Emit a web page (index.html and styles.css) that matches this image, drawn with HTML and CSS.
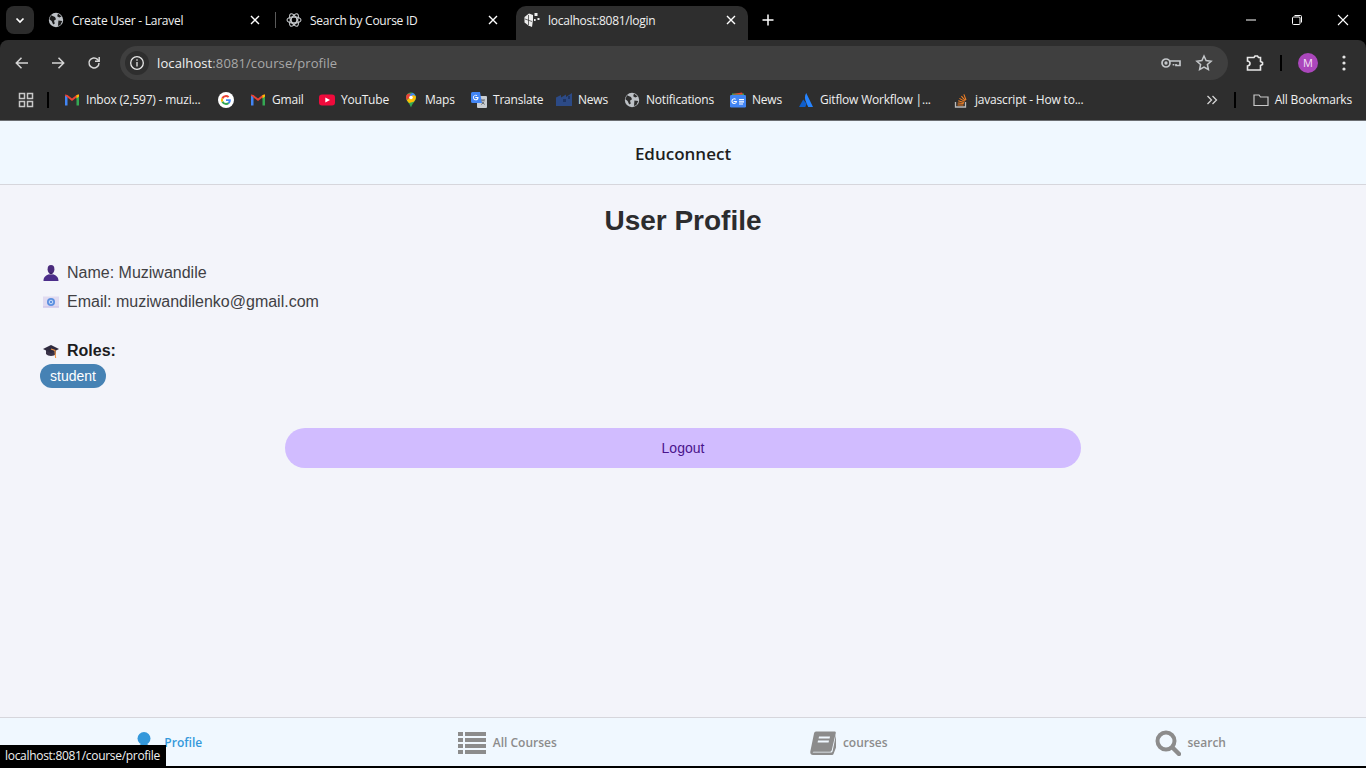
FILE: index.html
```html
<!DOCTYPE html>
<html lang="en">
<head>
    <meta charset="UTF-8">
    <meta name="viewport" content="width=device-width, initial-scale=1.0">
    <title>Educonnect</title>
    <link rel="stylesheet" href="styles.css">
</head>
<body>
    <div class="browser">
        <!-- Tab strip -->
        <div class="tabstrip">
            <div class="tab-search">
                <svg width="12" height="12" viewBox="0 0 12 12"><path d="M2.5 4.500 6 8l3.500-3.500" fill="none" stroke="#fff" stroke-width="1.700"/></svg>
            </div>
            <div class="tab">
                <svg class="tab-icon" viewBox="0 0 16 16"><circle cx="8" cy="8" r="7.200" fill="#bdc1c6"/><path d="M3 3.200 7 5l1 2.200-2 1.600.8 2.600-1.600 1L3.600 9 1.400 7.200zM10 1.600l3.600 2.800-2.400 1.200-2-1.400zM10.400 8.600l3.800.4-1.800 4-2.400 1z" fill="#1a1a1a"/></svg>
                <span class="tab-title">Create User - Laravel</span>
                <svg class="tab-close" viewBox="0 0 10 10"><path d="M1 1l8 8M9 1 1 9" stroke="#fff" stroke-width="1.400"/></svg>
            </div>
            <div class="tab-sep"></div>
            <div class="tab">
                <svg class="tab-icon" viewBox="0 0 16 16" fill="none" stroke="#c4c7ca" stroke-width="1.100"><circle cx="8" cy="8" r="3"/><ellipse cx="8" cy="8" rx="7" ry="3.200"/><ellipse cx="8" cy="8" rx="7" ry="3.200" transform="rotate(60 8 8)"/><ellipse cx="8" cy="8" rx="7" ry="3.200" transform="rotate(120 8 8)"/></svg>
                <span class="tab-title">Search by Course ID</span>
                <svg class="tab-close" viewBox="0 0 10 10"><path d="M1 1l8 8M9 1 1 9" stroke="#fff" stroke-width="1.400"/></svg>
            </div>
            <div class="tab tab-active">
                <svg class="tab-icon" viewBox="0 0 16 16" fill="#ececec"><path d="M0.500 5 5 1.500 9 3v5l-1 7-3.500-1.500-4-3z"/><path d="M10.500 1h3v3h-3zM13.500 6h2v2h-2zM10 7h1.600v2H10z"/><path d="M4.500 3v10M1 7l7 2.500" stroke="#2e2e2e" stroke-width=".7"/></svg>
                <span class="tab-title">localhost:8081/login</span>
                <svg class="tab-close" viewBox="0 0 10 10"><path d="M1 1l8 8M9 1 1 9" stroke="#fff" stroke-width="1.400"/></svg>
            </div>
            <svg class="new-tab" width="12" height="12" viewBox="0 0 12 12"><path d="M6 .5v11M.5 6h11" stroke="#fff" stroke-width="1.500"/></svg>
            <div class="window-btns">
                <svg width="12" height="12" viewBox="0 0 12 12"><path d="M1 6h10" stroke="#fff"/></svg>
                <svg width="12" height="12" viewBox="0 0 12 12" fill="none" stroke="#fff"><rect x="1.500" y="3" width="7.500" height="7.500" rx="1"/><path d="M3.500 1.500h6a1 1 0 0 1 1 1v6"/></svg>
                <svg width="12" height="12" viewBox="0 0 12 12"><path d="M1 1l10 10M11 1 1 11" stroke="#fff" stroke-width="1.100"/></svg>
            </div>
        </div>

        <!-- Toolbar -->
        <div class="toolbar">
            <div class="nav-btns">
                <svg width="16" height="16" viewBox="0 0 16 16" fill="none" stroke="#d5d5d5" stroke-width="1.500"><path d="M14 8H2.500M7.500 2.800 2.300 8l5.200 5.200"/></svg>
                <svg width="16" height="16" viewBox="0 0 16 16" fill="none" stroke="#d5d5d5" stroke-width="1.500"><path d="M2 8h11.500M8.500 2.800 13.700 8l-5.200 5.200"/></svg>
                <svg width="16" height="16" viewBox="0 0 16 16" fill="none" stroke="#d5d5d5" stroke-width="1.500"><path d="M13 8a5 5 0 1 1-1.500-3.600L13 6"/><path d="M13.200 2v4.200H9"/></svg>
            </div>
            <div class="omnibox">
                <div class="site-info">
                    <svg width="16" height="16" viewBox="0 0 16 16" fill="none" stroke="#e8e8e8" stroke-width="1.300"><circle cx="8" cy="8" r="6.300"/><path d="M8 7v4.500M8 4.300v1.500"/></svg>
                </div>
                <span class="url"><span class="url-host">localhost</span>:8081/course/profile</span>
                <svg class="omni-icon" width="20" height="12" viewBox="0 0 20 12" fill="none" stroke="#c4c7ca" stroke-width="1.700"><circle cx="5" cy="6" r="4"/><circle cx="5" cy="6" r=".8" fill="#c4c7ca"/><path d="M9 4h10v4.500h-4V7M12.500 8.500V7"/></svg>
                <svg class="omni-icon" width="18" height="18" viewBox="0 0 18 18" fill="none" stroke="#c4c7ca" stroke-width="1.500"><path d="m9 2 2.100 4.600 5 .6-3.700 3.300 1 5L9 13l-4.400 2.500 1-5L1.900 7.200l5-.6z"/></svg>
            </div>
            <svg class="ext-icon" width="20" height="20" viewBox="0 0 20 20" fill="none" stroke="#e8e8e8" stroke-width="1.600"><path d="M2.500 4.500H9l1-1.500h2.500l1 1.500H15.500v4l2 1v2l-2 1v4.500H2.500v-4q2.500-.5 2.500-2.500t-2.500-2.500z"/></svg>
            <div class="toolbar-sep"></div>
            <div class="avatar">M</div>
            <svg class="menu-icon" width="4" height="16" viewBox="0 0 4 16" fill="#e3e3e3"><circle cx="2" cy="2" r="1.600"/><circle cx="2" cy="8" r="1.600"/><circle cx="2" cy="14" r="1.600"/></svg>
        </div>

        <!-- Bookmarks bar -->
        <div class="bookmarks">
            <svg class="apps" width="16" height="16" viewBox="0 0 16 16" fill="none" stroke="#c8c8c8" stroke-width="1.500"><rect x="1.500" y="1.500" width="5" height="5"/><rect x="9.500" y="1.500" width="5" height="5"/><rect x="1.500" y="9.500" width="5" height="5"/><rect x="9.500" y="9.500" width="5" height="5"/></svg>
            <div class="bm-sep"></div>
            <div class="bm bm-inbox">
                <svg viewBox="0 0 16 16"><path d="M1 3.500 3.500 4v9.500H1z" fill="#4285f4"/><path d="M15 3.500 12.500 4v9.500H15z" fill="#34a853"/><path d="M1 3.500 8 9l7-5.500v-1L12.500 3 8 6.500 3.500 3 1 2.500z" fill="#ea4335"/><path d="M12.500 3 15 2.500v2L12.500 6.500z" fill="#fbbc04"/></svg>
                <span>Inbox (2,597) - muzi...</span>
            </div>
            <div class="bm bm-google">
                <svg viewBox="0 0 16 16"><circle cx="8" cy="8" r="8" fill="#fff"/><path d="M12.800 8.200c0-.4 0-.7-.1-1H8v1.900h2.700a2.300 2.300 0 0 1-1 1.500l1.600 1.200c.9-.9 1.500-2.100 1.500-3.600z" fill="#4285f4"/><path d="M8 13c1.300 0 2.400-.4 3.300-1.200l-1.600-1.200c-.5.300-1 .5-1.700.5a3 3 0 0 1-2.800-2L3.500 10.300A5 5 0 0 0 8 13z" fill="#34a853"/><path d="M5.200 9.100a3 3 0 0 1 0-2.200L3.500 5.700a5 5 0 0 0 0 4.600z" fill="#fbbc04"/><path d="M8 5c.7 0 1.400.3 1.900.8l1.400-1.400A5 5 0 0 0 3.500 5.700l1.700 1.200A3 3 0 0 1 8 5z" fill="#ea4335"/></svg>
            </div>
            <div class="bm bm-gmail">
                <svg viewBox="0 0 16 16"><path d="M1 3.500 3.500 4v9.500H1z" fill="#4285f4"/><path d="M15 3.500 12.500 4v9.500H15z" fill="#34a853"/><path d="M1 3.500 8 9l7-5.500v-1L12.500 3 8 6.500 3.500 3 1 2.500z" fill="#ea4335"/><path d="M12.500 3 15 2.500v2L12.500 6.500z" fill="#fbbc04"/></svg>
                <span>Gmail</span>
            </div>
            <div class="bm bm-youtube">
                <svg viewBox="0 0 16 16"><rect y="2.500" width="16" height="11" rx="3" fill="#f00b3c"/><path d="M6.300 5.500 11 8l-4.700 2.500z" fill="#fff"/></svg>
                <span>YouTube</span>
            </div>
            <div class="bm bm-maps">
                <svg viewBox="0 0 16 16"><path d="M8 .5c2.800 0 5 2.200 5 5 0 3.500-3.600 5.500-5 10-1.400-4.500-5-6.500-5-10 0-2.800 2.200-5 5-5z" fill="#34a853"/><path d="M3 5.500c0 1 .3 1.900.8 2.700L9.500 2.700A5 5 0 0 0 4.400 2 5 5 0 0 0 3 5.500z" fill="#ea4335"/><path d="M9.500 .8a5 5 0 0 1 3 3L10 6.500 6.500 3z" fill="#4285f4"/><path d="M12.800 4.200c.5 2.200-.6 3.900-2 5.500L6 11 3.800 8.200 10 3z" fill="#fbbc04"/><circle cx="8" cy="5.500" r="1.800" fill="#fff"/></svg>
                <span>Maps</span>
            </div>
            <div class="bm bm-translate">
                <svg viewBox="0 0 16 16"><rect x="6" y="4" width="10" height="12" rx="1" fill="#c9cdd2"/><path d="M0 1.500A1.500 1.500 0 0 1 1.500 0H9l2 11H1.500A1.500 1.500 0 0 1 0 9.500z" fill="#4285f4"/><path d="M7.500 5H4.300v1h2a1.800 1.800 0 1 1-.6-2l.7-.7A2.800 2.800 0 1 0 7.500 5z" fill="#fff"/><path d="M10 8h4M12 8v1M13 9.500l-2.500 3M11 9.500l2.500 3" stroke="#5f6368"/></svg>
                <span>Translate</span>
            </div>
            <div class="bm bm-news1">
                <svg viewBox="0 0 16 16"><path d="M0 5.500 5 3v2.500L10 2.500V5l6-4v13H0z" fill="#2c4a86"/><path d="M7 7h3v3H7zM12 4h2v3h-2z" fill="#1f3563"/></svg>
                <span>News</span>
            </div>
            <div class="bm bm-notif">
                <svg viewBox="0 0 16 16"><circle cx="8" cy="8" r="7.200" fill="#bdc1c6"/><path d="M3 3.200 7 5l1 2.200-2 1.600.8 2.600-1.600 1L3.600 9 1.400 7.200zM10 1.600l3.600 2.800-2.400 1.200-2-1.400zM10.400 8.600l3.800.4-1.800 4-2.400 1z" fill="#2e2e2e"/></svg>
                <span>Notifications</span>
            </div>
            <div class="bm bm-news2">
                <svg viewBox="0 0 16 16"><path d="M2 3V1.500h12V3z" fill="#34a853"/><path d="M3 2l9-1.500 1 2H3z" fill="#ea4335"/><rect y="3" width="16" height="12.500" rx="1.200" fill="#4285f4"/><path d="M7 9H3.600v1h2.300a1.800 1.800 0 1 1-.6-2.300l.7-.7A2.800 2.800 0 1 0 7 9z" fill="#fff"/><path d="M9 7h5v1.200H9zM9 9.200h5v1.200H9zM9 11.400h4v1.200H9z" fill="#fff"/></svg>
                <span>News</span>
            </div>
            <div class="bm bm-gitflow">
                <svg viewBox="0 0 16 16"><path d="M8.200 1c-1.800 3.200-1.600 6 0 9.500l2 4.500H15z" fill="#2684ff"/><path d="M5.200 7.500 1 15h6.300l1.300-3.200z" fill="#0f5ecb"/></svg>
                <span>Gitflow Workflow |...</span>
            </div>
            <div class="bm bm-js">
                <svg viewBox="0 0 16 16"><path d="M2.500 10v5h10v-5" fill="none" stroke="#bcbbbb" stroke-width="1.300"/><path d="M4.500 12.500h6v1h-6zM4.700 10.500l6 .6v1l-6-.6zM5.400 8.300l5.800 1.600-.3 1-5.800-1.600zM6.700 5.900l5.200 3-.5.800-5.200-3zM8.800 3.700l3.900 4.600-.8.700L8 4.400zM11.400 2.200l2.100 5.600-1 .4-2.100-5.600z" fill="#f48024"/></svg>
                <span>javascript - How to...</span>
            </div>
            <svg class="bm-more" width="12" height="12" viewBox="0 0 12 12" fill="none" stroke="#d5d5d5" stroke-width="1.300"><path d="m1.500 2 4 4-4 4M6.500 2l4 4-4 4"/></svg>
            <div class="bm-sep bm-sep-right"></div>
            <div class="bm bm-all">
                <svg viewBox="0 0 16 16" fill="none" stroke="#c8c8c8" stroke-width="1.200"><path d="M1 3h5l1.500 2H15v8.500H1z"/></svg>
                <span>All Bookmarks</span>
            </div>
        </div>
    </div>

    <!-- Page -->
    <div class="page">
        <header class="app-header">Educonnect</header>

        <main class="profile">
            <h1>User Profile</h1>
            <div class="info-row">
                <svg class="emoji" viewBox="0 0 16 16"><ellipse cx="8" cy="4.300" rx="3.400" ry="4.200" fill="#4a2b7c"/><path d="M6.500 7.500h3v2h-3z" fill="#3c2266"/><path d="M.5 16c0-4 2-5.500 5.500-6.800 1 .8 3 .8 4 0 3.500 1.300 5.500 2.800 5.500 6.800z" fill="#4b2d8a"/></svg>
                <span>Name: Muziwandile</span>
            </div>
            <div class="info-row">
                <svg class="emoji" viewBox="0 0 16 16"><rect y="2.500" width="16" height="11" fill="#e0daf0"/><path d="M0 12.500h16v1H0z" fill="#c8bce6"/><circle cx="8" cy="8" r="4" fill="#5b8fe0"/><circle cx="8" cy="8" r="1.800" fill="none" stroke="#cfe0fa"/></svg>
                <span>Email: muziwandilenko@gmail.com</span>
            </div>
            <div class="roles-row">
                <svg class="emoji" viewBox="0 0 16 16"><path d="M3 6v5c2 2.500 8 2.500 10 0V6z" fill="#3b3348"/><path d="M0 6 8 2l8 4-8 4z" fill="#2f2a3e"/><path d="M8 6l4 1.500.6 7.500" fill="none" stroke="#f2994a" stroke-width="1.100"/></svg>
                <span>Roles:</span>
            </div>
            <span class="role-badge">student</span>
            <button class="logout-btn" type="button">Logout</button>
        </main>

        <nav class="bottom-nav">
            <a class="nav-item nav-active">
                <svg class="nav-person" viewBox="0 0 18 26" fill="#3498db"><circle cx="9" cy="6.500" r="6.500"/><path d="M0 26C0 16 4 11.500 9 11.500S18 16 18 26z"/></svg>
                <span>Profile</span>
            </a>
            <a class="nav-item">
                <svg class="nav-list" viewBox="0 0 28 22" fill="#8c8c8c"><path d="M0 0h5v4H0zM7 0h21v4H7zM0 6h5v4H0zM7 6h21v4H7zM0 12h5v4H0zM7 12h21v4H7zM0 18h5v4H0zM7 18h21v4H7z"/></svg>
                <span>All Courses</span>
            </a>
            <a class="nav-item">
                <svg class="nav-book" viewBox="0 0 26 24"><path d="M6 .5h18.500c1 0 1.500.7 1.300 1.500l-4 17c-.3 1.200-1 1.800-2 1.800H3.500c-.9 0-1 .8-.2.8h17.500c1 0 1.500-.5 1.800-1.300L26 3.500v13l-2.500 6.500c-.3.700-1 1-1.800 1H3c-2 0-3-1.500-2.700-3.500L4 2.500C4.300 1.200 5 .5 6 .5z" fill="#8c8c8c"/><path d="M9 5.500h11l-.4 2H8.600zM8 9.500h11l-.4 2H7.600z" fill="#f0f8ff"/></svg>
                <span>courses</span>
            </a>
            <a class="nav-item">
                <svg class="nav-search" viewBox="0 0 26 26" fill="none" stroke="#8c8c8c"><circle cx="11" cy="11" r="8.500" stroke-width="4"/><path d="m17.500 17.500 6.500 6.500" stroke-width="4.400" stroke-linecap="round"/></svg>
                <span>search</span>
            </a>
        </nav>
    </div>

    <div class="status-tip">localhost:8081/course/profile</div>
</body>
</html>
```

FILE: styles.css
```css
html, body {
    height: 100%;
}

body {
    margin: 0;
    padding: 0;
    background-color: #000;
    font-family: "Liberation Sans", Arial, sans-serif;
    display: flex;
    flex-direction: column;
    height: 768px;
    overflow: hidden;
}

/* Browser chrome */
.browser {
    font-family: "Open Sans", "Noto Sans", sans-serif;
    color: #e8e8e8;
    flex: none;
}

.tabstrip {
    height: 40px;
    background-color: #000;
    display: flex;
    align-items: flex-end;
    padding-left: 6px;
}

.tab-search {
    width: 28px;
    height: 28px;
    margin-bottom: 6px;
    margin-right: 6px;
    border-radius: 8px;
    background-color: #2c2c2c;
    display: flex;
    align-items: center;
    justify-content: center;
}

.tab {
    width: 232px;
    height: 34px;
    box-sizing: border-box;
    padding: 0 12px 6px 8px;
    display: flex;
    align-items: center;
    border-radius: 10px 10px 0 0;
    font-size: 12px;
    letter-spacing: -0.25px;
    color: #f0f0f0;
}

.tab-active {
    margin-left: 6px;
    background-color: #2e2e2e;
}

.tab-icon {
    width: 16px;
    height: 16px;
    flex: none;
}

.tab-title {
    flex: 1;
    margin-left: 8px;
    white-space: nowrap;
}

.tab-close {
    width: 10px;
    height: 10px;
    flex: none;
}

.tab-sep {
    width: 1px;
    height: 16px;
    margin: 0 2px 12px 3px;
    background-color: #5a5a5a;
}

.new-tab {
    margin: 0 0 14px 14px;
}

.window-btns {
    margin-left: auto;
    margin-bottom: 14px;
    padding-right: 17px;
    display: flex;
    gap: 34px;
}

.toolbar {
    height: 40px;
    box-sizing: border-box;
    padding-top: 6px;
    background-color: #2e2e2e;
    border-radius: 8px 8px 0 0;
    display: flex;
    align-items: center;
}

.nav-btns {
    width: 120px;
    flex: none;
    box-sizing: border-box;
    padding-left: 14px;
    display: flex;
    gap: 20px;
}

.omnibox {
    width: 1108px;
    height: 34px;
    flex: none;
    box-sizing: border-box;
    padding: 0 15px 0 5px;
    border-radius: 17px;
    background-color: #3f3f3f;
    display: flex;
    align-items: center;
}

.site-info {
    width: 24px;
    height: 24px;
    border-radius: 50%;
    background-color: #2e2e2e;
    display: flex;
    align-items: center;
    justify-content: center;
}

.url {
    flex: 1;
    margin-left: 8px;
    font-size: 13px;
    letter-spacing: 0.1px;
    color: #a8a8a8;
}

.url-host {
    color: #f0f0f0;
}

.omni-icon {
    margin-left: 14px;
}

.ext-icon {
    margin-left: 17px;
}

.toolbar-sep {
    width: 2px;
    height: 16px;
    margin-left: 15px;
    background-color: #000;
}

.avatar {
    width: 20px;
    height: 20px;
    margin-left: 16px;
    border-radius: 50%;
    background-color: #ab47bc;
    color: #f3e5f5;
    font-size: 11px;
    line-height: 20px;
    text-align: center;
}

.menu-icon {
    margin-left: 24px;
}

.bookmarks {
    height: 41px;
    box-sizing: border-box;
    padding: 0 14px 1px 18px;
    background-color: #2e2e2e;
    border-bottom: 1px solid #6b6e72;
    display: flex;
    align-items: center;
    font-size: 12px;
    letter-spacing: -0.2px;
    color: #f0f0f0;
}

.apps {
    flex: none;
}

.bm-sep {
    width: 2px;
    height: 16px;
    margin: 0 15px 0 13px;
    background-color: #000;
    flex: none;
}

.bm-sep-right {
    margin: 0 17px 0 16px;
}

.bm {
    display: flex;
    align-items: center;
    gap: 6px;
    white-space: nowrap;
    flex: none;
}

.bm svg {
    width: 16px;
    height: 16px;
    flex: none;
}

.bm-inbox { width: 154px; }
.bm-google { width: 32px; }
.bm-gmail { width: 69px; }
.bm-youtube { width: 84px; }
.bm-maps { width: 68px; }
.bm-translate { width: 85px; }
.bm-news1 { width: 68px; }
.bm-notif { width: 106px; }
.bm-news2 { width: 68px; }
.bm-gitflow { width: 155px; }

.bm-js {
    margin-right: auto;
}

/* Page */
.page {
    flex: 1;
    min-height: 0;
    margin-bottom: 2px;
    background-color: #f3f4fa;
    display: flex;
    flex-direction: column;
}

.app-header {
    height: 63px;
    flex: none;
    border-bottom: 1px solid #d6d6dc;
    background-color: #f0f8ff;
    font-family: "Open Sans", "Noto Sans", sans-serif;
    font-size: 17px;
    font-weight: 600;
    line-height: 65px;
    text-align: center;
    color: #1e1e1e;
}

.profile {
    flex: 1;
    padding: 20px 40px 0;
    color: #404044;
}

.profile h1 {
    margin: 0 0 21px;
    font-size: 28px;
    line-height: 32px;
    text-align: center;
    color: #2c2c2e;
}

.info-row, .roles-row {
    display: flex;
    align-items: center;
    gap: 8px;
    height: 29px;
    padding-left: 3px;
    font-size: 16px;
}

.roles-row {
    margin-top: 20px;
    margin-bottom: -1px;
    color: #1c1c1e;
    font-weight: bold;
}

.emoji {
    width: 16px;
    height: 16px;
    flex: none;
}

.role-badge {
    display: inline-block;
    padding: 0 10px;
    border-radius: 12px;
    background-color: #4682b4;
    color: #fff;
    font-size: 14px;
    line-height: 24px;
}

.logout-btn {
    display: block;
    width: 796px;
    height: 40px;
    margin: 40px auto 0;
    border: none;
    border-radius: 20px;
    background-color: #d1bcff;
    color: #4a148c;
    font-family: "Liberation Sans", Arial, sans-serif;
    font-size: 14px;
}

.bottom-nav {
    height: 48px;
    flex: none;
    border-top: 1px solid #d6d6dc;
    background-color: #f0f8ff;
    display: grid;
    grid-template-columns: repeat(4, 1fr);
    font-family: "Open Sans", "Noto Sans", sans-serif;
    font-size: 12px;
    font-weight: 600;
    color: #8c8c8c;
}

.nav-item {
    display: flex;
    align-items: center;
    justify-content: center;
    gap: 7px;
    padding-right: 10px;
    padding-top: 1px;
}

.nav-active {
    color: #3498db;
    gap: 11px;
    padding-right: 4px;
}

.nav-person {
    width: 18px;
    height: 26px;
    margin-top: 5px;
}

.nav-list {
    width: 28px;
    height: 22px;
}

.nav-book {
    width: 26px;
    height: 24px;
}

.nav-search {
    width: 26px;
    height: 26px;
}

.status-tip {
    position: absolute;
    left: 0;
    bottom: 2px;
    height: 21px;
    padding: 0 6px 0 5px;
    background-color: #000;
    color: #f0f0f0;
    font-family: "Open Sans", "Noto Sans", sans-serif;
    font-size: 12px;
    letter-spacing: -0.3px;
    line-height: 21px;
}
```
